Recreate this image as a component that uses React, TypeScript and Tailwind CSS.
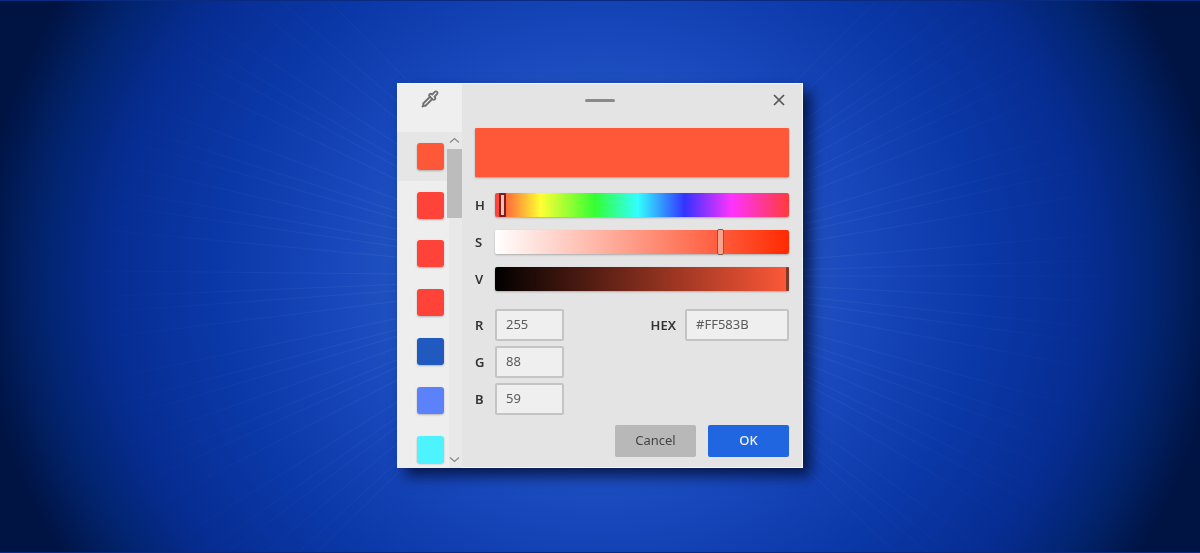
import React from "react";

const swatches = ["bg-[#ff5838]", "bg-[#ff4338]", "bg-[#ff4338]", "bg-[#ff4338]", "bg-[#2059bf]", "bg-[#5b82fb]", "bg-[#4df3ff]"];

const rayAngles = Array.from({ length: 120 }, (_, i) => (i * 137.508) % 360).filter((a) => Math.abs(Math.sin((a * Math.PI) / 180)) < 0.72);

function Rays() {
  return (
    <svg className="absolute inset-0 h-full w-full" viewBox="0 0 1200 553" aria-hidden="true">
      <defs>
        <radialGradient id="ray" gradientUnits="userSpaceOnUse" cx="600" cy="276" r="540">
          <stop offset="0.35" stopColor="#ffffff" stopOpacity="0.055" />
          <stop offset="1" stopColor="#ffffff" stopOpacity="0" />
        </radialGradient>
      </defs>
      {rayAngles.map((a) => {
        const r = (a * Math.PI) / 180;
        return (
          <line
            key={a}
            x1={600}
            y1={276}
            x2={600 + Math.cos(r) * 620}
            y2={276 + Math.sin(r) * 620}
            stroke="url(#ray)"
            strokeWidth={1}
          />
        );
      })}
    </svg>
  );
}

function Label({ children }: { children: React.ReactNode }) {
  return <span className="w-5 text-[13px] font-semibold leading-none text-[#333]">{children}</span>;
}

function Slider({ name, bar, thumb }: { name: string; bar: string; thumb: React.ReactNode }) {
  return (
    <div className="flex items-center">
      <Label>{name}</Label>
      <div className={`relative h-6 flex-1 rounded-[2px] shadow-[0_1px_2px_rgba(0,0,0,0.25)] ${bar}`}>{thumb}</div>
    </div>
  );
}

function Field({ value, className }: { value: string; className: string }) {
  return (
    <div className={`flex h-8 items-center rounded-[2px] border-2 border-[#c4c4c4] bg-[#efefef] pl-[9px] text-[13px] text-[#5a5a5a] ${className}`}>
      {value}
    </div>
  );
}

export default function App() {
  return (
    <div
      className="relative h-[553px] w-full overflow-hidden border-y border-[#0a2a80] bg-[radial-gradient(ellipse_620px_560px_at_50%_50%,#3468d2_0%,#2a5cc6_22%,#1848bc_42%,#0b38a8_62%,#062c90_80%,#02246f_90%,#001444_100%)] pt-[82px]"
      style={{ fontFamily: '"Noto Sans", "Open Sans", sans-serif' }}
    >
      <Rays />
      <div className="relative mx-auto flex h-[385px] w-[406px] overflow-visible bg-[#e4e4e4] shadow-[8px_8px_13px_rgba(0,10,40,0.75)] outline-1 -outline-offset-1 outline-[#f6f6f6] blur-[0.45px]">
        <aside className="flex min-h-0 w-[65px] flex-col">
          <div className="flex h-[49px] shrink-0 items-start justify-center bg-[#efefef] pt-[7px]">
            <svg width="18" height="18" viewBox="0 0 24 24" fill="none" stroke="#707070" strokeWidth="2.4" strokeLinecap="round" strokeLinejoin="round">
              <path d="m2 22 1-1h3l9-9" />
              <path d="M3 21v-3l9-9" />
              <path d="m15 6 3.4-3.4a2.1 2.1 0 1 1 3 3L18 9l.4.4a2.1 2.1 0 1 1-3 3l-3.8-3.8a2.1 2.1 0 1 1 3-3l.4.4Z" />
            </svg>
          </div>
          <div className="relative flex min-h-0 flex-1">
            <div className="flex w-[52px] flex-col overflow-hidden bg-[#eeeeee]">
              {swatches.map((c, i) => (
                <div key={i} className={`flex h-[48.8px] shrink-0 items-center pl-5 ${i === 0 ? "bg-[#e6e6e6]" : ""}`}>
                  <div className={`h-[27px] w-[27px] rounded-[3px] shadow-[0_1px_2px_rgba(0,0,0,0.25)] ${c}`} />
                </div>
              ))}
            </div>
            <div className="relative w-[13px] bg-[#e8e8e8]">
              <svg width="11" height="7" viewBox="0 0 11 7" fill="none" stroke="#8a8a8a" strokeWidth="1.3" className="absolute left-0 top-[5px]">
                <path d="m1 5.5 4.5-4 4.5 4" />
              </svg>
              <svg width="11" height="7" viewBox="0 0 11 7" fill="none" stroke="#8a8a8a" strokeWidth="1.3" className="absolute bottom-[5px] left-0">
                <path d="m1 1.5 4.5 4 4.5-4" />
              </svg>
            </div>
            <div className="absolute left-[50px] top-[17px] h-[69px] w-[15px] bg-[#bcbcbc]" />
          </div>
        </aside>

        <main className="flex min-w-0 flex-1 flex-col pl-[13px] pr-[14px]">
          <div className="relative flex h-[45px] shrink-0 items-start justify-center pt-[16px]">
            <div className="mr-[65px] h-[3px] w-[30px] rounded-full bg-[#8a8a8a]" />
            <svg width="12" height="12" viewBox="0 0 12 12" fill="none" stroke="#555" strokeWidth="1.7" className="absolute right-[4px] top-[11px]">
              <path d="m1 1 10 10M11 1 1 11" />
            </svg>
          </div>
          <div className="h-[49px] shrink-0 rounded-[1px] bg-[#ff5838] shadow-[0_1px_2px_rgba(0,0,0,0.3)]" />
          <div className="mt-4 flex flex-col gap-[13px]">
            <Slider
              name="H"
              bar="bg-[linear-gradient(to_right,#ff3b3b_0%,#ffff33_15.5%,#33ff33_34%,#33ffff_48.5%,#3333ff_64.5%,#ff33ff_80.5%,#ff3b3b_100%)]"
              thumb={<div className="absolute left-[4px] top-0 h-full w-[7px] rounded-[1px] border-2 border-[#7a2020] bg-[#f8bfb0]" />}
            />
            <Slider
              name="S"
              bar="bg-[linear-gradient(to_right,#ffffff_0%,#ff2a00_100%)]"
              thumb={<div className="absolute left-[222px] top-[-1px] h-[26px] w-[7px] rounded-[2px] border-[1.5px] border-[#7d5a52] bg-[#f6a38f]" />}
            />
            <Slider
              name="V"
              bar="bg-[linear-gradient(to_right,#000000_0%,#ff5838_100%)]"
              thumb={<div className="absolute right-[0px] top-0 h-full w-[3px] rounded-[1px] bg-[#7a3a2c]" />}
            />
          </div>

          <div className="mt-[18px] flex items-start">
            <div className="flex flex-col gap-[5px]">
              {[["R", "255"], ["G", "88"], ["B", "59"]].map(([l, v]) => (
                <div key={l} className="flex items-center">
                  <Label>{l}</Label>
                  <Field value={v} className="w-[69px]" />
                </div>
              ))}
            </div>
            <div className="ml-auto flex items-center">
              <span className="mr-[9px] text-[13px] font-semibold leading-none text-[#333]">HEX</span>
              <Field value="#FF583B" className="w-[104px]" />
            </div>
          </div>

          <div className="mt-[10px] flex justify-end gap-3">
            <button className="h-8 w-[81px] rounded-[2px] bg-[#b8b8b8] text-[13px] text-[#444]">Cancel</button>
            <button className="h-8 w-[81px] rounded-[2px] bg-[#1f66e0] text-[13px] font-medium text-[#eef4ff]">OK</button>
          </div>
        </main>
      </div>
    </div>
  );
}
